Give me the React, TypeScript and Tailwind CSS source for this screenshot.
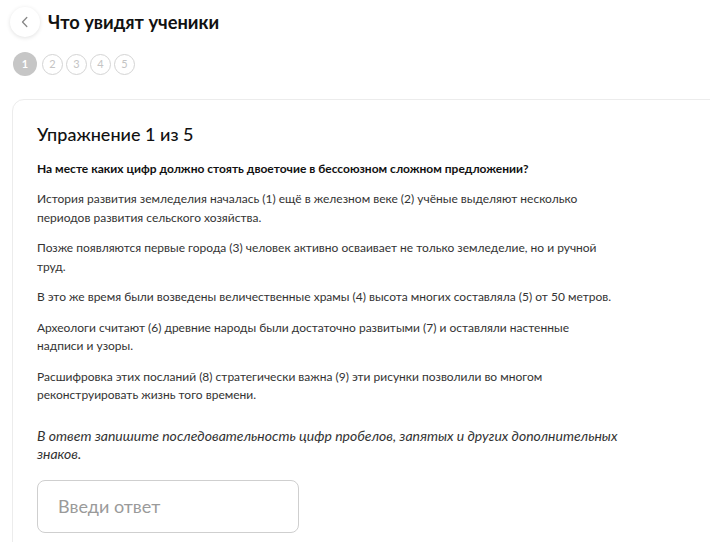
const paragraphs = [
  "История развития земледелия началась (1) ещё в железном веке (2) учёные выделяют несколько периодов развития сельского хозяйства.",
  "Позже появляются первые города (3) человек активно осваивает не только земледелие, но и ручной труд.",
  "В это же время были возведены величественные храмы (4) высота многих составляла (5) от 50 метров.",
  "Археологи считают (6) древние народы были достаточно развитыми (7) и оставляли настенные\nнадписи и узоры.",
  "Расшифровка этих посланий (8) стратегически важна (9) эти рисунки позволили во многом реконструировать жизнь того времени.",
];

const App: React.FC = () => {
  return (
    <div className="w-[710px] h-[542px] overflow-hidden bg-white text-[#1a1a1a] font-['Lato',sans-serif]">
      {/* Header */}
      <div className="flex items-center pl-[10px] pt-[7px]">
        <button className="w-[30px] h-[30px] rounded-full bg-white shadow-[0_1px_4px_rgba(0,0,0,0.12)] flex items-center justify-center">
          <svg width="14" height="14" viewBox="0 0 14 14" fill="none">
            <path d="M8.8 2.5 L4.5 7 L8.8 11.5" stroke="#888" strokeWidth="1.3" strokeLinecap="round" strokeLinejoin="round" />
          </svg>
        </button>
        <h1 className="ml-[8px] text-[18.3px] font-bold leading-none text-[#111]">Что увидят ученики</h1>
      </div>

      {/* Steps */}
      <div className="flex items-center gap-[3px] pl-[13px] mt-[15px]">
        <div className="w-[24px] h-[24px] mr-[2px] rounded-full bg-[#c6c6c6] text-white text-[11px] font-bold flex items-center justify-center">1</div>
        {[2, 3, 4, 5].map((n) => (
          <div key={n} className="w-[21px] h-[21px] rounded-full border border-[#d4d4d4] text-[#c4c4c4] text-[11px] flex items-center justify-center">
            {n}
          </div>
        ))}
      </div>

      {/* Card */}
      <div className="ml-[12px] mt-[23px] w-[720px] rounded-[12px] border border-[#ececec] pl-[24px] pt-[22px] pb-[20px]">
        <h2 className="text-[18px] font-medium leading-[24px] text-[#111]">Упражнение 1 из 5</h2>
        <p className="mt-[14px] text-[12px] font-bold leading-[18px] text-[#111]">
          На месте каких цифр должно стоять двоеточие в бессоюзном сложном предложении?
        </p>
        <div className="mt-[12px] w-[590px] flex flex-col gap-[12px]">
          {paragraphs.map((t, i) => (
            <p key={i} className="whitespace-pre-line text-[12px] leading-[18.5px] text-[#333]">{t}</p>
          ))}
        </div>
        <p className="mt-[22px] w-[590px] italic text-[14px] leading-[18px] text-[#333]">
          В ответ запишите последовательность цифр пробелов, запятых и других дополнительных знаков.
        </p>
        <input
          type="text"
          placeholder="Введи ответ"
          className="mt-[17px] w-[262px] h-[53px] rounded-[8px] border border-[#cfcfcf] px-[20px] text-[18px] placeholder:text-[#9a9a9a] outline-none"
        />
      </div>
    </div>
  );
};

export default App;
